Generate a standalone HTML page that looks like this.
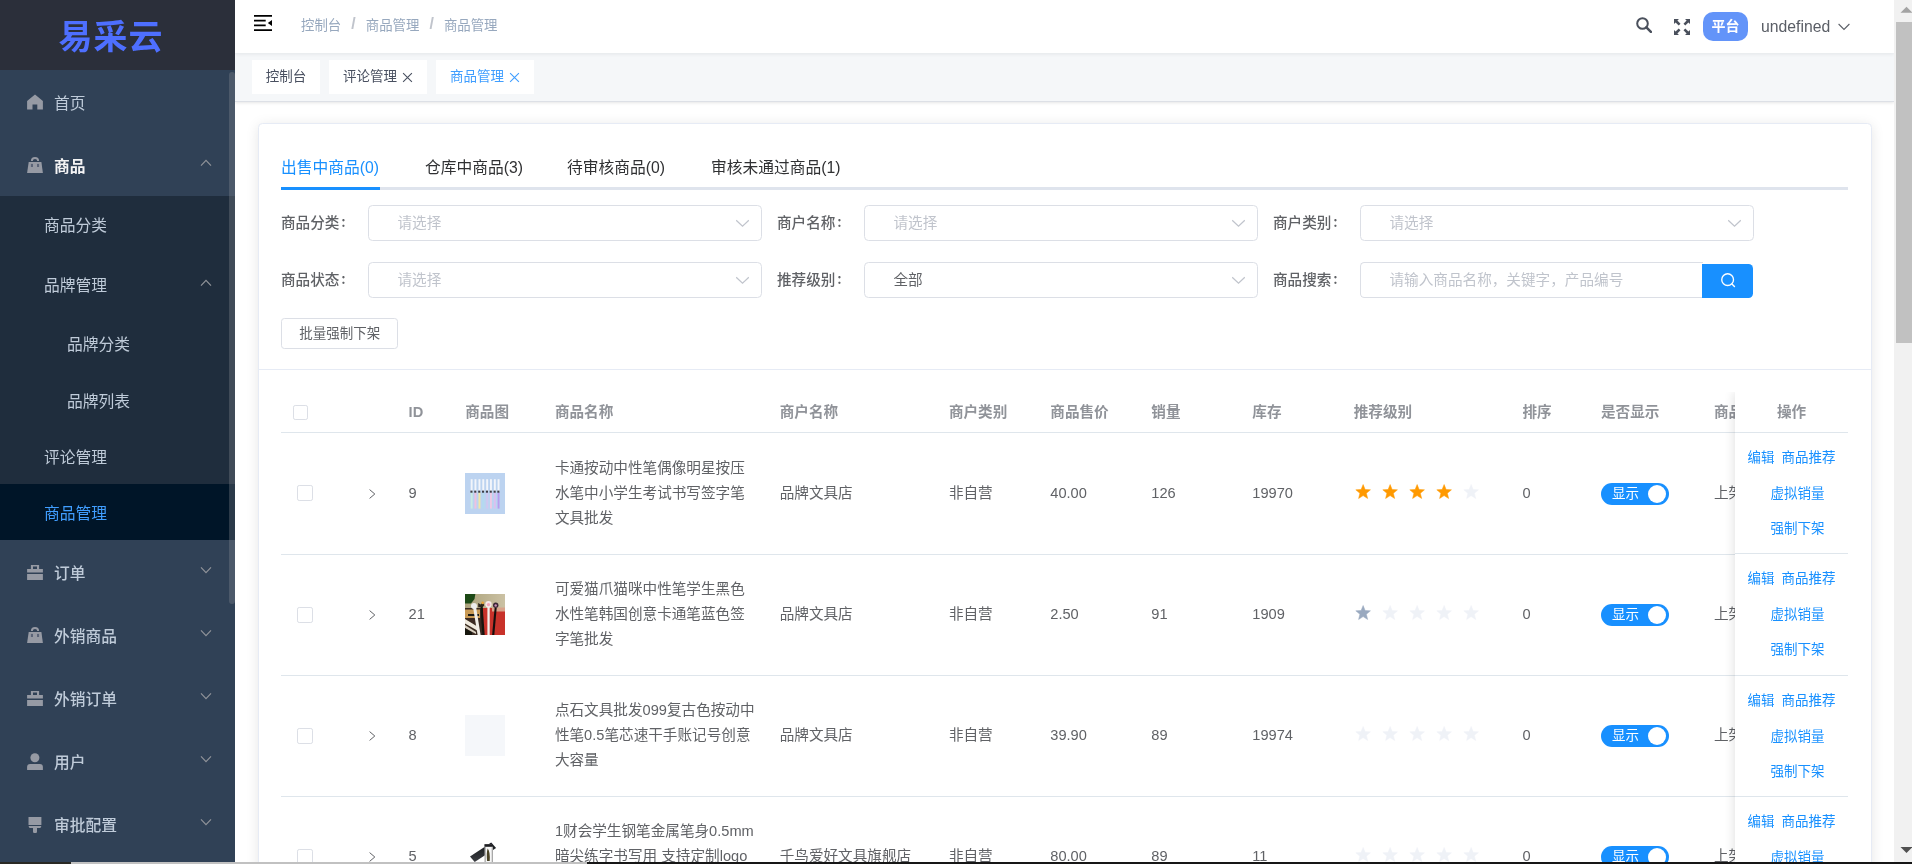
<!DOCTYPE html>
<html lang="zh-CN">
<head>
<meta charset="utf-8">
<title>易采云 - 商品管理</title>
<style>
*{box-sizing:border-box;margin:0;padding:0}
html,body{width:1912px;height:864px;overflow:hidden;background:#fff}
body{font-family:"Liberation Sans","Noto Sans CJK SC",sans-serif;font-size:14px;color:#606266;position:relative}
a{text-decoration:none;color:inherit}
ul{list-style:none}

/* ---------- sidebar ---------- */
#side{will-change:transform;position:absolute;left:0;top:0;width:235px;height:862px;background:#304156;overflow:hidden}
#logo{height:70px;background:#2b2f3a;text-align:center;line-height:70px;color:#4e6fff;font-weight:700;font-size:34px;letter-spacing:1px}
#logo span{position:relative;left:-6.600px;top:2px}
#menu{position:absolute;left:0;top:0;width:235px;height:862px}
#menu .it{position:absolute;left:0;width:235px;height:63px;line-height:63px;color:#bfcbd9;font-size:15.75px;padding-left:54px;padding-top:2px;white-space:nowrap}
#menu .it.b{font-weight:500}
#menu .it.b.op{color:#f4f4f5;font-weight:700}
#menu .it svg.ic{position:absolute;left:27px;width:16px;height:16px;fill:#969aa4}
#menu .it .ar{position:absolute;left:200px;top:50%;width:12px;height:12px;margin-top:-7.300px;stroke:#909399;fill:none;stroke-width:1.2}
#menu .it.sub{background:#1f2d3d;padding-left:44px}
#menu .it.sub2{background:#1f2d3d;padding-left:67px}
#menu .it.act{background:#001528;color:#409eff}
#sthumb{position:absolute;left:229px;top:72px;width:5.500px;height:532px;border-radius:3px;background:rgba(144,147,153,.3)}

/* ---------- header ---------- */
#main{will-change:transform;position:absolute;left:235px;top:0;width:1659px;height:862px;background:#fff;overflow:hidden}
#nav{position:absolute;left:0;top:0;width:1659px;height:53px;background:#fff;box-shadow:0 1px 4px rgba(0,21,41,.08);z-index:3}
#tags{position:absolute;left:0;top:53px;width:1659px;height:49px;background:#f5f7f9;border-bottom:1px solid #dde0e6;box-shadow:0 1px 3px rgba(0,0,0,.10);z-index:2}
#tags .tg{position:absolute;top:7px;height:34px;line-height:34px;background:#fff;font-size:13.5px;color:#495060;text-align:center;white-space:nowrap}
#tags .tg.on{color:#409eff}

#ham{position:absolute;left:19px;top:15px}
#bc{position:absolute;left:66px;top:0;height:49px;line-height:49px;font-size:13.4px;color:#97a8be;white-space:nowrap}
#bc i{font-style:normal;color:#c0c4cc;margin:0 10.100px;font-weight:700;font-size:15.750px;position:relative;top:-1px}
#sch{position:absolute;left:1401px;top:17px}
#full{position:absolute;left:1439px;top:19px}
#plat{position:absolute;left:1468px;top:12px;width:45px;height:29px;border-radius:10px;background:#6394f9;color:#fff;font-size:14px;font-weight:700;text-align:center;line-height:28px}
#usr{position:absolute;left:1526px;top:0;height:53px;line-height:53px;font-size:15.75px;color:#5a5e66}
#uar{position:absolute;left:1603px;top:23px}
#tags .tg svg.x{width:11px;height:11px;margin-left:5px;stroke:#495060;stroke-width:1;fill:none;vertical-align:-1.500px}
#tags .tg.on svg.x{stroke:#409eff}

/* ---------- card ---------- */
#card{position:absolute;left:23px;top:123px;width:1614px;height:800px;background:#fff;border:1px solid #e6ebf5;border-radius:4.500px;box-shadow:0 2px 13px rgba(0,0,0,.1)}

#cc{position:absolute;left:0;top:0;width:1659px;height:862px;z-index:1}
#tabs{position:absolute;left:0;top:0}
#tabs .tb{position:absolute;top:156px;height:24px;line-height:24px;font-size:15.75px;color:#303133;white-space:nowrap}
#tabs .tb.on{color:#1890ff}
#tline{position:absolute;left:46px;top:187px;width:1567px;height:3px;background:#dfe4ed}
#tact{position:absolute;left:46px;top:187px;width:99px;height:3px;background:#1890ff}
.fl{position:absolute;height:36px;line-height:33px;font-size:14.625px;font-weight:500;color:#606266;white-space:nowrap}
.fl b{font-weight:500;font-family:"Noto Sans CJK SC","Liberation Sans",sans-serif;position:relative;left:1.800px;top:-1px}
.sel{position:absolute;width:394px;height:36px;border:1px solid #dcdfe6;border-radius:4.5px;background:#fff}
.sel .ph{position:absolute;left:28.500px;top:0;line-height:35px;font-size:14.625px;color:#c0c4cc;white-space:nowrap}
.sel .ph.v{color:#606266}
.sel .dn{position:absolute;right:12.200px;top:13px;width:13px;height:8.700px;fill:none;stroke:#c0c4cc;stroke-width:1.100}
.sel.inp{border-radius:4.5px 0 0 4.5px;border-right:0}
#sbtn{position:absolute;left:1467px;top:264px;width:51px;height:34px;background:#1890ff;border-radius:0 4.500px 4.500px 0}
#sbtn svg{position:absolute;left:17.700px;top:8.400px}
#bbtn{position:absolute;left:46px;top:318px;width:117px;height:31px;border:1px solid #dcdfe6;border-radius:3.400px;background:#fff;color:#606266;font-size:13.5px;text-align:center;line-height:30px;padding-left:.5px}
#hr{position:absolute;left:24px;top:369px;width:1612px;height:1px;background:#e6ebf5}

#tbl{position:absolute;left:46px;top:392px;width:1567px;height:480px;font-size:14.625px;color:#606266;overflow:hidden}
#tbl .th{position:absolute;left:0;top:0;width:1567px;height:41px;border-bottom:1px solid #dfe6ec;color:#909399;font-weight:700}
#tbl .th .c{top:0;height:40px;line-height:39px}
#tbl .tr{position:absolute;left:0;width:1567px;border-bottom:1px solid #dfe6ec}
#tbl .c{position:absolute;top:0;height:121px;display:flex;align-items:center;white-space:nowrap;line-height:25px}
#tbl .tr.up .c,#tbl .tr.up .ex,#tbl .tr.up .im,#tbl .tr.up .sw,#tbl .tr.up .rt{margin-top:-1px}
#tbl .c.n{font-size:14.625px}
#tbl .ck{position:absolute;top:52px;width:16px;height:16px;border:1px solid #dcdfe6;border-radius:2.200px;background:#fff}
#tbl .ck.h{top:13px;width:15px;height:15px}
#tbl .ex{position:absolute;left:87.800px;top:56px;width:7px;height:10px;fill:none;stroke:#606266;stroke-width:1}
#tbl .im{position:absolute;left:184px;top:40px;width:40px;height:41px;overflow:hidden}
#tbl .im svg{display:block}
#tbl .im.i1{background:#bcd3f0}
#tbl .im.i2{background:#a91b16}
#tbl .im.i3{background:#f5f7fa}
#tbl .im.i4{background:#fff}
#tbl .rt{position:absolute;left:1072.300px;top:49px;height:21px;white-space:nowrap;font-size:0}
#tbl .st{width:20.250px;height:20.250px;margin-right:6.750px;vertical-align:top;stroke-linejoin:round;stroke-width:.5}
#tbl .st.on{stroke:#ff9900}
#tbl .st.lo{stroke:#99a9bf}
#tbl .st.off{stroke:#eff2f7}
#tbl .st.on{fill:#ff9900}
#tbl .st.lo{fill:#99a9bf}
#tbl .st.off{fill:#eff2f7}
#tbl .sw{position:absolute;left:1320px;top:50px;width:68px;height:22px;border-radius:11px;background:#1890ff}
#tbl .sw em{position:absolute;left:11px;top:0;line-height:22px;font-size:13.500px;font-style:normal;color:#fff}
#tbl .sw i{position:absolute;right:3px;top:2px;width:18px;height:18px;border-radius:50%;background:#fff}
#fx{position:absolute;left:1454.200px;top:0;width:112.800px;height:480px;background:#fff;box-shadow:-2px 0 9px rgba(0,0,0,.10)}
#fx .fh{position:absolute;left:0;top:0;width:112.800px;height:41px;line-height:41px;text-align:center;color:#909399;font-weight:700;border-bottom:1px solid #dfe6ec}
#fx .fr{position:absolute;left:0;width:112.800px;border-bottom:1px solid #dfe6ec;text-align:center;font-size:13.500px;color:#1890ff;padding-top:7.300px}
#fx .fr p{height:35.500px;line-height:35.500px;white-space:nowrap}
#fx .fr a.m{margin-left:7px}
#fx .fr p+p{padding-left:11.800px}

/* ---------- page scrollbar ---------- */
#vs{position:absolute;left:1894px;top:0;width:18px;height:862px;background:#f1f1f1;overflow:hidden}
#vs .th{position:absolute;left:2px;top:22px;width:17px;height:321px;background:#c1c1c1}
#vs svg{position:absolute;left:0;top:0}
#hs{position:absolute;left:0;top:862px;width:1912px;height:2px;background:linear-gradient(90deg,#2a2a24 0,#2a2a24 71px,#161616 71px)}
#hs i{position:absolute;left:71px;top:0;width:516px;height:2px;background:#c1c1c1}
</style>
</head>
<body>

<div id="side">
  <div id="logo"><span>易采云</span></div>
  <div id="menu">
    <div class="it" style="top:70px"><svg class="ic" style="top:24px" viewBox="0 0 16 16"><path d="M8 .4 .1 6.900V15.600H5.500V10.600H10.300V15.600H15.900V6.900Z"/></svg>首页</div>
    <div class="it b op" style="top:133px"><svg class="ic" style="top:24px" viewBox="0 0 16 16"><path d="M1.700 5H14.400L15.900 15.900H.1Z"/><path d="M4.850 4.100A3.150 3.150 0 0 1 11.150 4.100" fill="none" stroke="#969aa4" stroke-width="1.900"/><rect x="3.900" y="6.900" width="2.100" height="3.100" fill="#5a6478"/><rect x="10" y="6.900" width="2.100" height="3.100" fill="#5a6478"/></svg>商品<svg class="ar" viewBox="0 0 12 12"><path d="M1 8.600 6 3.400 11 8.600"/></svg></div>
    <div class="it sub" style="top:196px;height:56px;line-height:56px">商品分类</div>
    <div class="it sub" style="top:252px;height:64px;line-height:64px">品牌管理<svg class="ar" viewBox="0 0 12 12"><path d="M1 8.600 6 3.400 11 8.600"/></svg></div>
    <div class="it sub2" style="top:315px;height:57px;line-height:56px">品牌分类</div>
    <div class="it sub2" style="top:372px;height:56px;line-height:56px">品牌列表</div>
    <div class="it sub" style="top:428px;height:56px;line-height:56px">评论管理</div>
    <div class="it sub act" style="top:484px;height:56px;line-height:56px">商品管理</div>
    <div class="it b" style="top:540px"><svg class="ic" style="top:25px" viewBox="0 0 16 16"><path fill-rule="evenodd" d="M3.900 .1H12.100V4.100H15.900V7.500H.1V4.100H3.900ZM6 1.500V4.100H10V1.500ZM.1 8.900H15.900V15H.1Z"/></svg>订单<svg class="ar" viewBox="0 0 12 12"><path d="M1 3.400 6 8.600 11 3.400"/></svg></div>
    <div class="it b" style="top:603px"><svg class="ic" style="top:24px" viewBox="0 0 16 16"><path d="M1.700 5H14.400L15.900 15.900H.1Z"/><path d="M4.850 4.100A3.150 3.150 0 0 1 11.150 4.100" fill="none" stroke="#969aa4" stroke-width="1.900"/><rect x="3.900" y="6.900" width="2.100" height="3.100" fill="#5a6478"/><rect x="10" y="6.900" width="2.100" height="3.100" fill="#5a6478"/></svg>外销商品<svg class="ar" viewBox="0 0 12 12"><path d="M1 3.400 6 8.600 11 3.400"/></svg></div>
    <div class="it b" style="top:666px"><svg class="ic" style="top:25px" viewBox="0 0 16 16"><path fill-rule="evenodd" d="M3.900 .1H12.100V4.100H15.900V7.500H.1V4.100H3.900ZM6 1.500V4.100H10V1.500ZM.1 8.900H15.900V15H.1Z"/></svg>外销订单<svg class="ar" viewBox="0 0 12 12"><path d="M1 3.400 6 8.600 11 3.400"/></svg></div>
    <div class="it b" style="top:729px"><svg class="ic" style="top:24px;height:18px" viewBox="0 0 16 18"><circle cx="7.900" cy="4.700" r="4.500"/><path d="M.1 17V14a3.100 3.100 0 0 1 3.100-3.100H12.800A3.100 3.100 0 0 1 15.900 14V17Z"/></svg>用户<svg class="ar" viewBox="0 0 12 12"><path d="M1 3.400 6 8.600 11 3.400"/></svg></div>
    <div class="it b" style="top:792px"><svg class="ic" style="top:25px" viewBox="0 0 16 16"><path d="M1.500 0H14.400V7.900H1.500ZM1.500 9H14.400L13.400 11H10V14.800A1.200 1.200 0 0 1 8.800 16H7.200A1.200 1.200 0 0 1 6 14.800V11H2.500Z"/></svg>审批配置<svg class="ar" viewBox="0 0 12 12"><path d="M1 3.400 6 8.600 11 3.400"/></svg></div>
  </div>
  <div id="sthumb"></div>
</div>

<div id="main">
  <div id="nav">
    <svg id="ham" viewBox="0 0 18 16" width="18" height="16"><path d="M0 0h18v1.800H0zM0 4.800h11.700v1.800H0zM0 9.400h11.700v1.800H0zM0 14.200h18V16H0zM18 5v5.900L13.800 7.950z" fill="#000"/></svg>
    <div id="bc"><span>控制台</span><i>/</i><span>商品管理</span><i>/</i><span>商品管理</span></div>
    <svg id="sch" viewBox="0 0 16 16" width="16" height="16"><circle cx="6.500" cy="6.500" r="5.300" fill="none" stroke="#4a505c" stroke-width="2"/><path d="M10.400 10.400 14.900 14.900" stroke="#4a505c" stroke-width="2.500" stroke-linecap="round"/></svg>
    <svg id="full" viewBox="0 0 16 16" width="16" height="16" fill="#4a505c"><path d="M0 0h5L3.400 1.600 6.500 4.700 4.700 6.500 1.600 3.400 0 5zM16 0v5l-1.600-1.600-3.100 3.100-1.800-1.800 3.100-3.100L11 0zM0 16v-5l1.600 1.600 3.100-3.100 1.800 1.800-3.100 3.100L5 16zM16 16h-5l1.600-1.600-3.100-3.100 1.800-1.800 3.100 3.100 1.600-1.600z"/></svg>
    <div id="plat">平台</div>
    <div id="usr">undefined</div>
    <svg id="uar" viewBox="0 0 12 8" width="12" height="8"><path d="M0.600 1 6 6.400 11.400 1" fill="none" stroke="#5a5e66" stroke-width="1.100"/></svg>
  </div>
  <div id="tags">
    <div class="tg" style="left:17px;width:68px">控制台</div>
    <div class="tg" style="left:94px;width:98px">评论管理<svg class="x" viewBox="0 0 10 10"><path d="M1 1l8 8M9 1 1 9"/></svg></div>
    <div class="tg on" style="left:201px;width:98px">商品管理<svg class="x" viewBox="0 0 10 10"><path d="M1 1l8 8M9 1 1 9"/></svg></div>
  </div>
  <div id="card"></div>
  <div id="cc">
    <div id="tabs">
      <span class="tb on" style="left:46px">出售中商品(0)</span>
      <span class="tb" style="left:190px">仓库中商品(3)</span>
      <span class="tb" style="left:332px">待审核商品(0)</span>
      <span class="tb" style="left:476px">审核未通过商品(1)</span>
      <div id="tline"></div><div id="tact"></div>
    </div>

    <label class="fl" style="left:46px;top:205px">商品分类<b>:</b></label>
    <div class="sel" style="left:133px;top:205px"><span class="ph">请选择</span><svg class="dn" viewBox="0 0 12 8"><path d="M0.200 1.200 6 6.600 11.800 1.200"/></svg></div>
    <label class="fl" style="left:542px;top:205px">商户名称<b>:</b></label>
    <div class="sel" style="left:629px;top:205px"><span class="ph">请选择</span><svg class="dn" viewBox="0 0 12 8"><path d="M0.200 1.200 6 6.600 11.800 1.200"/></svg></div>
    <label class="fl" style="left:1038px;top:205px">商户类别<b>:</b></label>
    <div class="sel" style="left:1125px;top:205px"><span class="ph">请选择</span><svg class="dn" viewBox="0 0 12 8"><path d="M0.200 1.200 6 6.600 11.800 1.200"/></svg></div>

    <label class="fl" style="left:46px;top:262px">商品状态<b>:</b></label>
    <div class="sel" style="left:133px;top:262px"><span class="ph">请选择</span><svg class="dn" viewBox="0 0 12 8"><path d="M0.200 1.200 6 6.600 11.800 1.200"/></svg></div>
    <label class="fl" style="left:542px;top:262px">推荐级别<b>:</b></label>
    <div class="sel" style="left:629px;top:262px"><span class="ph v">全部</span><svg class="dn" viewBox="0 0 12 8"><path d="M0.200 1.200 6 6.600 11.800 1.200"/></svg></div>
    <label class="fl" style="left:1038px;top:262px">商品搜索<b>:</b></label>
    <div class="sel inp" style="left:1125px;top:262px;width:343px"><span class="ph">请输入商品名称，关键字，产品编号</span></div>
    <div id="sbtn"><svg viewBox="0 0 16 16" width="16.500" height="16.500"><circle cx="7.400" cy="7.400" r="5.700" fill="none" stroke="#fff" stroke-width="1.300"/><path d="M11.600 11.600 14 14" stroke="#fff" stroke-width="1.400" stroke-linecap="round"/></svg></div>

    <div id="bbtn">批量强制下架</div>
    <div id="hr"></div>
    <div id="tbl">
    <div class="th">
    <span class="ck h" style="left:12px"></span>
    <span class="c n" style="left:127.600px">ID</span>
    <span class="c" style="left:184.200px">商品图</span>
    <span class="c" style="left:273.900px">商品名称</span>
    <span class="c" style="left:498.700px">商户名称</span>
    <span class="c" style="left:667.900px">商户类别</span>
    <span class="c" style="left:769.300px">商品售价</span>
    <span class="c" style="left:870.300px">销量</span>
    <span class="c" style="left:971.300px">库存</span>
    <span class="c" style="left:1072.700px">推荐级别</span>
    <span class="c" style="left:1241.400px">排序</span>
    <span class="c" style="left:1320px">是否显示</span>
    <span class="c" style="left:1433px">商品状态</span>
    </div>
    <div class="tr" style="top:41px;height:122px">
    <span class="ck" style="left:16px"></span>
    <svg class="ex" viewBox="0 0 7 10"><path d="M0.600 0.600 5.800 5 0.600 9.400"/></svg>
    <span class="c n" style="left:127.600px">9</span>
    <div class="im i1"><svg viewBox="0 0 40 41" width="40" height="41"><defs><filter id="b1" x="-10%" y="-10%" width="120%" height="120%"><feGaussianBlur stdDeviation=".45"/></filter></defs><rect width="40" height="41" fill="#bcd3f0"/><g filter="url(#b1)"><rect x="5.7" y="6.200" width="1.900" height="13" fill="#f2f5fb"/><rect x="5.7" y="19.200" width="1.900" height="16.400" fill="#c9ece4"/><rect x="5.4" y="17.600" width="2.100" height="2.100" fill="#3a3c46"/><rect x="9.5" y="6.200" width="1.900" height="13" fill="#f2f5fb"/><rect x="9.5" y="19.200" width="1.900" height="16.400" fill="#efc1e0"/><rect x="9.2" y="17.600" width="2.100" height="2.100" fill="#3a3c46"/><rect x="13.5" y="6.200" width="1.900" height="13" fill="#f2f5fb"/><rect x="13.5" y="19.200" width="1.900" height="16.400" fill="#f1e6a6"/><rect x="13.2" y="17.600" width="2.100" height="2.100" fill="#3a3c46"/><rect x="17.3" y="6.200" width="1.900" height="13" fill="#f2f5fb"/><rect x="17.3" y="19.200" width="1.900" height="16.400" fill="#b3daf0"/><rect x="17.0" y="17.600" width="2.100" height="2.100" fill="#3a3c46"/><rect x="21.2" y="6.200" width="1.900" height="13" fill="#f2f5fb"/><rect x="21.2" y="19.200" width="1.900" height="16.400" fill="#cfc8f0"/><rect x="20.9" y="17.600" width="2.100" height="2.100" fill="#3a3c46"/><rect x="25.0" y="6.200" width="1.900" height="13" fill="#f2f5fb"/><rect x="25.0" y="19.200" width="1.900" height="16.400" fill="#efc9e4"/><rect x="24.7" y="17.600" width="2.100" height="2.100" fill="#3a3c46"/><rect x="28.9" y="6.200" width="1.900" height="13" fill="#f2f5fb"/><rect x="28.9" y="19.200" width="1.900" height="16.400" fill="#dac0f0"/><rect x="28.6" y="17.600" width="2.100" height="2.100" fill="#3a3c46"/><rect x="32.6" y="6.200" width="1.900" height="13" fill="#f2f5fb"/><rect x="32.6" y="19.200" width="1.900" height="16.400" fill="#b69cee"/><rect x="32.3" y="17.600" width="2.100" height="2.100" fill="#3a3c46"/></g></svg></div>
    <span class="c nm" style="left:273.900px">卡通按动中性笔偶像明星按压<br>水笔中小学生考试书写签字笔<br>文具批发</span>
    <span class="c" style="left:498.700px">品牌文具店</span>
    <span class="c" style="left:667.900px">非自营</span>
    <span class="c n" style="left:769.300px">40.00</span>
    <span class="c n" style="left:870.300px">126</span>
    <span class="c n" style="left:971.300px">19970</span>
    <span class="rt"><svg class="st on" viewBox="0 0 20 20"><path d="M10.00 2.50 11.97 7.39 17.23 7.75 13.19 11.14 14.47 16.25 10.00 13.45 5.53 16.25 6.81 11.14 2.77 7.75 8.03 7.39Z"/></svg><svg class="st on" viewBox="0 0 20 20"><path d="M10.00 2.50 11.97 7.39 17.23 7.75 13.19 11.14 14.47 16.25 10.00 13.45 5.53 16.25 6.81 11.14 2.77 7.75 8.03 7.39Z"/></svg><svg class="st on" viewBox="0 0 20 20"><path d="M10.00 2.50 11.97 7.39 17.23 7.75 13.19 11.14 14.47 16.25 10.00 13.45 5.53 16.25 6.81 11.14 2.77 7.75 8.03 7.39Z"/></svg><svg class="st on" viewBox="0 0 20 20"><path d="M10.00 2.50 11.97 7.39 17.23 7.75 13.19 11.14 14.47 16.25 10.00 13.45 5.53 16.25 6.81 11.14 2.77 7.75 8.03 7.39Z"/></svg><svg class="st off" viewBox="0 0 20 20"><path d="M10.00 2.50 11.97 7.39 17.23 7.75 13.19 11.14 14.47 16.25 10.00 13.45 5.53 16.25 6.81 11.14 2.77 7.75 8.03 7.39Z"/></svg></span>
    <span class="c n" style="left:1241.400px">0</span>
    <span class="sw"><em>显示</em><i></i></span>
    <span class="c" style="left:1433px">上架</span>
    </div>
    <div class="tr up" style="top:163px;height:121px">
    <span class="ck" style="left:16px"></span>
    <svg class="ex" viewBox="0 0 7 10"><path d="M0.600 0.600 5.800 5 0.600 9.400"/></svg>
    <span class="c n" style="left:127.600px">21</span>
    <div class="im i2"><svg viewBox="0 0 40 41" width="40" height="41"><defs><filter id="b2" x="-10%" y="-10%" width="120%" height="120%"><feGaussianBlur stdDeviation=".55"/></filter><linearGradient id="w2" x1="0" y1="0" x2="1" y2="0"><stop offset="0" stop-color="#a9a078"/><stop offset="1" stop-color="#cdc3a6"/></linearGradient></defs><rect width="40" height="41" fill="#c8322b"/><g filter="url(#b2)"><rect x="-2" y="-2" width="44" height="16.500" fill="url(#w2)"/><path d="M-1 -1h11.500l-1 6-3.500 4.500H-1z" fill="#1e4a17"/><rect x="-1" y="14" width="19" height="28" fill="#3a2c20"/><path d="M0 15.500h15v8.500H0z" fill="#c99a55"/><path d="M3 20h11v2H3z" fill="#1c1a18"/><path d="M0 25 14 33.500v4L0 29.500z" fill="#efe9dd"/><path d="M0 31l11 7v2L0 34z" fill="#d8cfc0"/><path d="M-1 33.500 7 38.500v3.500H-1z" fill="#16120f"/><rect x="18" y="14" width="23" height="28" fill="#c8322b"/><path d="M27 13.500h13v4H27z" fill="#d9a28a"/><path d="M8 13l3-.6L15.600 41h-3z" fill="#f1eee8"/><path d="M15.500 13h2.200L19.700 41h-2.300z" fill="#17130f"/><path d="M22.400 13h2.300V41h-2.300z" fill="#f4f1ec"/><path d="M29.600 14h2.100L29.300 41h-2.200z" fill="#15110e"/><circle cx="9" cy="12" r="3" fill="#eeeeec"/><path d="M13.200 9l2.600 1.500 2-2.800 1.400 3.500-1.500 2h-4.500z" fill="#2b241b"/><circle cx="17.700" cy="8.800" r="1.400" fill="#e7a43a"/><circle cx="23.500" cy="10.300" r="3.200" fill="#f7e9ea"/><circle cx="23.500" cy="10.600" r="1.700" fill="#f3a7ba"/><circle cx="30.700" cy="11.300" r="2.700" fill="#3a2634"/><circle cx="30.700" cy="11.500" r="1.200" fill="#c88fb5"/></g></svg></div>
    <span class="c nm" style="left:273.900px">可爱猫爪猫咪中性笔学生黑色<br>水性笔韩国创意卡通笔蓝色签<br>字笔批发</span>
    <span class="c" style="left:498.700px">品牌文具店</span>
    <span class="c" style="left:667.900px">非自营</span>
    <span class="c n" style="left:769.300px">2.50</span>
    <span class="c n" style="left:870.300px">91</span>
    <span class="c n" style="left:971.300px">1909</span>
    <span class="rt"><svg class="st lo" viewBox="0 0 20 20"><path d="M10.00 2.50 11.97 7.39 17.23 7.75 13.19 11.14 14.47 16.25 10.00 13.45 5.53 16.25 6.81 11.14 2.77 7.75 8.03 7.39Z"/></svg><svg class="st off" viewBox="0 0 20 20"><path d="M10.00 2.50 11.97 7.39 17.23 7.75 13.19 11.14 14.47 16.25 10.00 13.45 5.53 16.25 6.81 11.14 2.77 7.75 8.03 7.39Z"/></svg><svg class="st off" viewBox="0 0 20 20"><path d="M10.00 2.50 11.97 7.39 17.23 7.75 13.19 11.14 14.47 16.25 10.00 13.45 5.53 16.25 6.81 11.14 2.77 7.75 8.03 7.39Z"/></svg><svg class="st off" viewBox="0 0 20 20"><path d="M10.00 2.50 11.97 7.39 17.23 7.75 13.19 11.14 14.47 16.25 10.00 13.45 5.53 16.25 6.81 11.14 2.77 7.75 8.03 7.39Z"/></svg><svg class="st off" viewBox="0 0 20 20"><path d="M10.00 2.50 11.97 7.39 17.23 7.75 13.19 11.14 14.47 16.25 10.00 13.45 5.53 16.25 6.81 11.14 2.77 7.75 8.03 7.39Z"/></svg></span>
    <span class="c n" style="left:1241.400px">0</span>
    <span class="sw"><em>显示</em><i></i></span>
    <span class="c" style="left:1433px">上架</span>
    </div>
    <div class="tr up" style="top:284px;height:121px">
    <span class="ck" style="left:16px"></span>
    <svg class="ex" viewBox="0 0 7 10"><path d="M0.600 0.600 5.800 5 0.600 9.400"/></svg>
    <span class="c n" style="left:127.600px">8</span>
    <div class="im i3"></div>
    <span class="c nm" style="left:273.900px">点石文具批发099复古色按动中<br>性笔0.5笔芯速干手账记号创意<br>大容量</span>
    <span class="c" style="left:498.700px">品牌文具店</span>
    <span class="c" style="left:667.900px">非自营</span>
    <span class="c n" style="left:769.300px">39.90</span>
    <span class="c n" style="left:870.300px">89</span>
    <span class="c n" style="left:971.300px">19974</span>
    <span class="rt"><svg class="st off" viewBox="0 0 20 20"><path d="M10.00 2.50 11.97 7.39 17.23 7.75 13.19 11.14 14.47 16.25 10.00 13.45 5.53 16.25 6.81 11.14 2.77 7.75 8.03 7.39Z"/></svg><svg class="st off" viewBox="0 0 20 20"><path d="M10.00 2.50 11.97 7.39 17.23 7.75 13.19 11.14 14.47 16.25 10.00 13.45 5.53 16.25 6.81 11.14 2.77 7.75 8.03 7.39Z"/></svg><svg class="st off" viewBox="0 0 20 20"><path d="M10.00 2.50 11.97 7.39 17.23 7.75 13.19 11.14 14.47 16.25 10.00 13.45 5.53 16.25 6.81 11.14 2.77 7.75 8.03 7.39Z"/></svg><svg class="st off" viewBox="0 0 20 20"><path d="M10.00 2.50 11.97 7.39 17.23 7.75 13.19 11.14 14.47 16.25 10.00 13.45 5.53 16.25 6.81 11.14 2.77 7.75 8.03 7.39Z"/></svg><svg class="st off" viewBox="0 0 20 20"><path d="M10.00 2.50 11.97 7.39 17.23 7.75 13.19 11.14 14.47 16.25 10.00 13.45 5.53 16.25 6.81 11.14 2.77 7.75 8.03 7.39Z"/></svg></span>
    <span class="c n" style="left:1241.400px">0</span>
    <span class="sw"><em>显示</em><i></i></span>
    <span class="c" style="left:1433px">上架</span>
    </div>
    <div class="tr up" style="top:405px;height:121px">
    <span class="ck" style="left:16px"></span>
    <svg class="ex" viewBox="0 0 7 10"><path d="M0.600 0.600 5.800 5 0.600 9.400"/></svg>
    <span class="c n" style="left:127.600px">5</span>
    <div class="im i4"><svg viewBox="0 0 40 41" width="40" height="41"><defs><filter id="b4" x="-10%" y="-10%" width="120%" height="120%"><feGaussianBlur stdDeviation=".4"/></filter><linearGradient id="k4" x1="0" y1="0" x2="0" y2="1"><stop offset="0" stop-color="#15171a"/><stop offset="1" stop-color="#3b3e42"/></linearGradient></defs><rect width="40" height="41" fill="#fff"/><g filter="url(#b4)" transform="translate(0 1)"><path d="M5 19.400 19.500 9.900 26.200 5.600 31.100 11.100 9.700 24.900z" fill="url(#k4)"/><rect x="19.500" y="7.200" width="8.500" height="20" fill="#a9a9a9"/><rect x="19.500" y="7.200" width="8.500" height="2.500" fill="#1d1e20"/><rect x="20.800" y="10" width="5.900" height="16" fill="#f6f6f6"/><path d="M22.700 11.500q2.600 3 2 12.500h-2.600q-.8-8.500.6-12.500z" fill="#4a4326"/></g></svg></div>
    <span class="c nm" style="left:273.900px">1财会学生钢笔金属笔身0.5mm<br>暗尖练字书写用 支持定制logo<br>商务办公</span>
    <span class="c" style="left:498.700px">千鸟爱好文具旗舰店</span>
    <span class="c" style="left:667.900px">非自营</span>
    <span class="c n" style="left:769.300px">80.00</span>
    <span class="c n" style="left:870.300px">89</span>
    <span class="c n" style="left:971.300px">11</span>
    <span class="rt"><svg class="st off" viewBox="0 0 20 20"><path d="M10.00 2.50 11.97 7.39 17.23 7.75 13.19 11.14 14.47 16.25 10.00 13.45 5.53 16.25 6.81 11.14 2.77 7.75 8.03 7.39Z"/></svg><svg class="st off" viewBox="0 0 20 20"><path d="M10.00 2.50 11.97 7.39 17.23 7.75 13.19 11.14 14.47 16.25 10.00 13.45 5.53 16.25 6.81 11.14 2.77 7.75 8.03 7.39Z"/></svg><svg class="st off" viewBox="0 0 20 20"><path d="M10.00 2.50 11.97 7.39 17.23 7.75 13.19 11.14 14.47 16.25 10.00 13.45 5.53 16.25 6.81 11.14 2.77 7.75 8.03 7.39Z"/></svg><svg class="st off" viewBox="0 0 20 20"><path d="M10.00 2.50 11.97 7.39 17.23 7.75 13.19 11.14 14.47 16.25 10.00 13.45 5.53 16.25 6.81 11.14 2.77 7.75 8.03 7.39Z"/></svg><svg class="st off" viewBox="0 0 20 20"><path d="M10.00 2.50 11.97 7.39 17.23 7.75 13.19 11.14 14.47 16.25 10.00 13.45 5.53 16.25 6.81 11.14 2.77 7.75 8.03 7.39Z"/></svg></span>
    <span class="c n" style="left:1241.400px">0</span>
    <span class="sw"><em>显示</em><i></i></span>
    <span class="c" style="left:1433px">上架</span>
    </div>
    <div id="fx">
    <div class="fh">操作</div>
    <div class="fr" style="top:41px;height:121px"><p><a>编辑</a><a class="m">商品推荐</a></p><p><a>虚拟销量</a></p><p><a>强制下架</a></p></div>
    <div class="fr" style="top:162px;height:122px"><p><a>编辑</a><a class="m">商品推荐</a></p><p><a>虚拟销量</a></p><p><a>强制下架</a></p></div>
    <div class="fr" style="top:284px;height:121px"><p><a>编辑</a><a class="m">商品推荐</a></p><p><a>虚拟销量</a></p><p><a>强制下架</a></p></div>
    <div class="fr" style="top:405px;height:121px"><p><a>编辑</a><a class="m">商品推荐</a></p><p><a>虚拟销量</a></p><p><a>强制下架</a></p></div>
    </div>
    </div>
  </div>
</div>

<div id="vs"><div class="th"></div><svg width="18" height="862" viewBox="0 0 18 862"><path d="M12.500 6.700 6.500 12.800h12z" fill="#a3a3a3"/><path d="M12.500 853 6.500 846.900h12z" fill="#505050"/></svg></div>
<div id="hs"><i></i></div>

</body>
</html>
